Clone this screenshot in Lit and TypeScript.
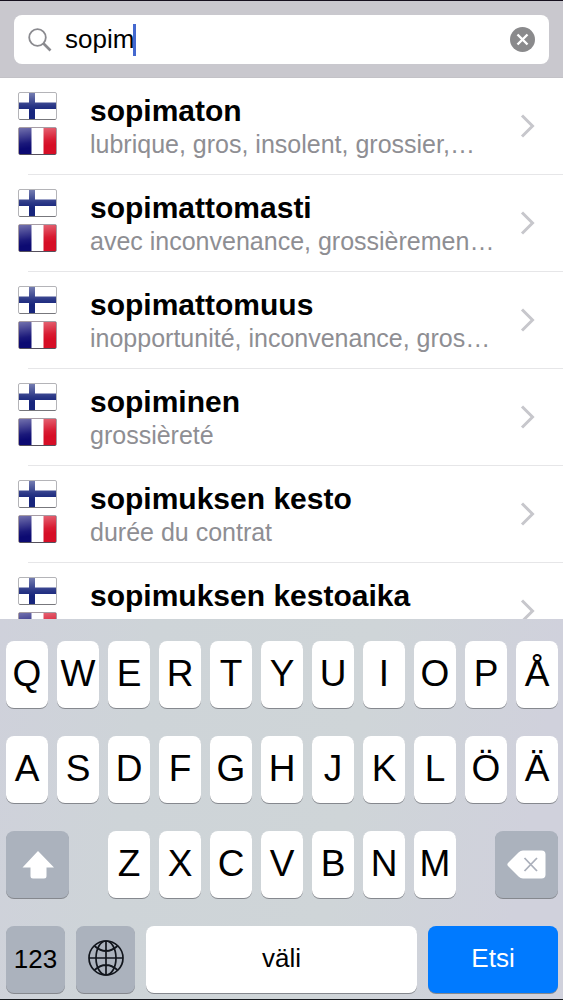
import { LitElement, html, svg, css, nothing } from "lit";
import { customElement, property, state } from "lit/decorators.js";

interface Entry {
  word: string;
  gloss?: string;
}

const ENTRIES: Entry[] = [
  { word: "sopimaton", gloss: "lubrique, gros, insolent, grossier,…" },
  { word: "sopimattomasti", gloss: "avec inconvenance, grossièremen…" },
  { word: "sopimattomuus", gloss: "inopportunité, inconvenance, gros…" },
  { word: "sopiminen", gloss: "grossièreté" },
  { word: "sopimuksen kesto", gloss: "durée du contrat" },
  { word: "sopimuksen kestoaika" },
];

const finland = html`
  <svg viewBox="0 0 39 28" role="img" aria-label="suomi">
    <defs>
      <linearGradient id="gloss" x1="0" y1="0" x2="0" y2="1">
        <stop offset="0" stop-color="#fff" stop-opacity=".4" />
        <stop offset=".5" stop-color="#fff" stop-opacity=".08" />
        <stop offset=".7" stop-color="#fff" stop-opacity="0" />
      </linearGradient>
    </defs>
    <rect x=".5" y=".5" width="38" height="27" rx="1.5" fill="#fff" />
    <path d="M11 1h6v26h-6zM1 10.500h37v6.500H1z" fill="#17257c" />
    <rect x="1" y="1" width="37" height="26" fill="url(#gloss)" />
    <rect x=".5" y=".5" width="38" height="27" rx="1.5" fill="none" stroke="#b4b4b8" />
    <path d="M1.500 27.500h36" stroke="#77777c" />
  </svg>
`;

const france = html`
  <svg viewBox="0 0 39 28" role="img" aria-label="ranska">
    <defs>
      <linearGradient id="shine" x1="0" y1="0" x2=".2" y2="1">
        <stop offset="0" stop-color="#fff" stop-opacity=".42" />
        <stop offset=".6" stop-color="#fff" stop-opacity=".06" />
        <stop offset=".8" stop-color="#fff" stop-opacity="0" />
      </linearGradient>
    </defs>
    <rect x=".5" y=".5" width="38" height="27" rx="1.5" fill="#fff" />
    <path d="M1 1h12.500v26H1z" fill="#0c0a72" />
    <path d="M25.500 1H38v26H25.500z" fill="#d60e26" />
    <rect x="1" y="1" width="37" height="26" fill="url(#shine)" />
    <rect x=".5" y=".5" width="38" height="27" rx="1.5" fill="none" stroke="#6a5a68" stroke-opacity=".6" />
    <path d="M1.500 27.500h36" stroke="#55505c" />
  </svg>
`;

@customElement("dictionary-row")
class DictionaryRow extends LitElement {
  @property({ attribute: false }) entry!: Entry;

  static styles = css`
    :host {
      display: block;
    }
    .row {
      display: grid;
      grid-template-columns: 39px 1fr 16px;
      column-gap: 33px;
      height: 97px;
      box-sizing: border-box;
      padding: 0 27px 0 18px;
      color: #000;
      text-decoration: none;
      background: linear-gradient(#e6e6e8, #e6e6e8) 28px 100% / 100% 1px no-repeat;
    }
    .flags {
      display: grid;
      gap: 7px;
      align-content: start;
      padding-top: 14px;
    }
    .flags svg {
      display: block;
      width: 39px;
      height: 28px;
    }
    .text {
      min-width: 0;
      padding-top: 16px;
      margin-right: -30px;
    }
    .word,
    .gloss {
      display: block;
      overflow: hidden;
      white-space: nowrap;
      text-overflow: ellipsis;
    }
    .word {
      font-size: 30px;
      line-height: 34px;
      font-weight: 700;
    }
    .gloss {
      font-size: 25px;
      line-height: 32px;
      color: #8e8e93;
    }
    .chevron {
      width: 16px;
      height: 26px;
      margin-top: 35px;
    }
  `;

  render() {
    const { word, gloss } = this.entry;
    return html`
      <a class="row" href="#">
        <span class="flags">${finland}${france}</span>
        <span class="text">
          <span class="word">${word}</span>
          ${gloss ? html`<span class="gloss">${gloss}</span>` : nothing}
        </span>
        <svg class="chevron" viewBox="0 0 16 26" aria-hidden="true">
          <path d="M2 2.500 12.500 13 2 23.500" fill="none" stroke="#c7c7cc" stroke-width="3" />
        </svg>
      </a>
    `;
  }
}

const shiftIcon = svg`<path d="M17 1 33 17.500H25.500V26a2.500 2.500 0 0 1-2.500 2.500H12A2.500 2.500 0 0 1 9.500 26V17.500H1.500Z" fill="#fff"/>`;

@customElement("touch-keyboard")
class TouchKeyboard extends LitElement {
  static styles = css`
    :host {
      display: block;
    }
    .board {
      display: grid;
      gap: 28px;
      padding: 22px 5px 6px 6px;
      border-bottom: 1px solid #15181d;
      background: linear-gradient(100deg, #cfd1db 0%, #ced4d8 25%, #cfd5d8 60%, #d0d1dc 90%);
    }
    .letters {
      display: grid;
      grid-template-columns: repeat(11, 1fr);
      column-gap: 9px;
    }
    .bottom {
      display: grid;
      grid-template-columns: 59fr 59fr 271fr 130fr;
      column-gap: 11px;
    }
    .key {
      display: flex;
      align-items: center;
      justify-content: center;
      min-width: 0;
      height: 67px;
      padding: 0 0 1px;
      border: 0;
      border-radius: 8px;
      background: #fff;
      box-shadow: 0 1px 0 #85888e;
      color: #000;
      font-family: inherit;
      font-size: 37px;
      line-height: 44px;
    }
    .small {
      font-size: 26px;
      line-height: 32px;
    }
    .label {
      padding-bottom: 4px;
    }
    .dark {
      background: #abb2bd;
    }
    .go {
      background: #007aff;
      color: #fff;
    }
    .shift,
    .erase {
      grid-column: span 2;
      width: 68%;
    }
    .erase {
      grid-column: 10 / span 2;
      justify-self: end;
    }
    .icon {
      display: block;
    }
  `;

  private letters(row: string) {
    return [...row].map((c) => html`<button class="key" type="button">${c}</button>`);
  }

  render() {
    return html`
      <div class="board">
        <div class="letters">${this.letters("QWERTYUIOPÅ")}</div>
        <div class="letters">${this.letters("ASDFGHJKLÖÄ")}</div>
        <div class="letters">
          <button class="key dark shift" type="button" aria-label="Vaihto">
            <svg class="icon" width="34" height="29" viewBox="0 0 34 29">${shiftIcon}</svg>
          </button>
          ${this.letters("ZXCVBNM")}
          <button class="key dark erase" type="button" aria-label="Poista">
            <svg class="icon" width="39" height="29" viewBox="0 0 39 29">
              <path
                d="M1 13 11.500 2.500Q13.500.500 16 .500H34.500a4 4 0 0 1 4 4v20a4 4 0 0 1-4 4H16q-2.500 0-4.500-2L1 16Q-.300 14.500 1 13Z"
                fill="#fff"
              />
              <path d="M17.500 8 30 21M30 8 17.500 21" stroke="#abb0bb" stroke-width="1.800" />
            </svg>
          </button>
        </div>
        <div class="bottom">
          <button class="key dark small" type="button">123</button>
          <button class="key dark label" type="button" aria-label="Kieli">
            <svg class="icon" width="36" height="36" viewBox="0 0 36 36" fill="none" stroke="#11151c" stroke-width="1.700">
              <circle cx="18" cy="18" r="17" />
              <ellipse cx="18" cy="18" rx="10" ry="17" />
              <path d="M18 1v34M1 18h34M6.500 6Q18 16 29.500 6M6.500 30Q18 20 29.500 30" />
            </svg>
          </button>
          <button class="key small label" type="button">väli</button>
          <button class="key go small label" type="button">Etsi</button>
        </div>
      </div>
    `;
  }
}

@customElement("app-root")
class AppRoot extends LitElement {
  @state() private query = "sopim";

  static styles = css`
    :host {
      display: flex;
      flex-direction: column;
      height: 100vh;
      overflow: hidden;
      background: #fff;
      font-family: "Liberation Sans", Arial, Helvetica, sans-serif;
    }
    .bar {
      flex: none;
      padding: 14px 14px 13px;
      border-top: 1px solid #16101e;
      border-bottom: 1px solid #c3c2c7;
      background: #c9c8ce;
    }
    .field {
      display: flex;
      align-items: center;
      height: 49px;
      padding: 0 14px;
      border-radius: 8px;
      background: #fff;
    }
    .lens {
      flex: none;
      margin-right: 13px;
    }
    .query {
      field-sizing: content;
      min-width: 0;
      padding: 0 0 2px;
      border: 0;
      outline: 0;
      background: none;
      color: #000;
      font-family: inherit;
      font-size: 26px;
      line-height: 32px;
      caret-color: transparent;
    }
    .caret {
      width: 3px;
      height: 32px;
      margin-left: -1px;
      background: #4468cf;
    }
    .clear {
      flex: none;
      margin-left: auto;
      padding: 0;
      border: 0;
      background: none;
    }
    .clear svg {
      display: block;
    }
    .results {
      flex: 1;
      min-height: 0;
      overflow: hidden;
    }
    .keyboard {
      flex: none;
    }
  `;

  render() {
    return html`
      <div class="bar">
        <label class="field">
          <svg class="lens" width="24" height="24" viewBox="0 0 24 24" fill="none" stroke="#8a8a8f" aria-hidden="true">
            <circle cx="9.500" cy="9.500" r="8.300" stroke-width="1.800" />
            <path d="m15.500 15.500 7 7" stroke-width="2.600" />
          </svg>
          <input
            class="query"
            type="text"
            aria-label="Haku"
            .value=${this.query}
            @input=${(e: Event) => (this.query = (e.target as HTMLInputElement).value)}
          />
          <span class="caret"></span>
          <button class="clear" type="button" aria-label="Tyhjennä" @click=${() => (this.query = "")}>
            <svg width="25" height="25" viewBox="0 0 25 25">
              <circle cx="12.500" cy="12.500" r="12.500" fill="#8a8a8c" />
              <path d="m7.500 7.500 10 10m0-10-10 10" stroke="#fff" stroke-width="2.400" />
            </svg>
          </button>
        </label>
      </div>
      <div class="results">
        ${ENTRIES.map((entry) => html`<dictionary-row .entry=${entry}></dictionary-row>`)}
      </div>
      <touch-keyboard class="keyboard"></touch-keyboard>
    `;
  }
}
